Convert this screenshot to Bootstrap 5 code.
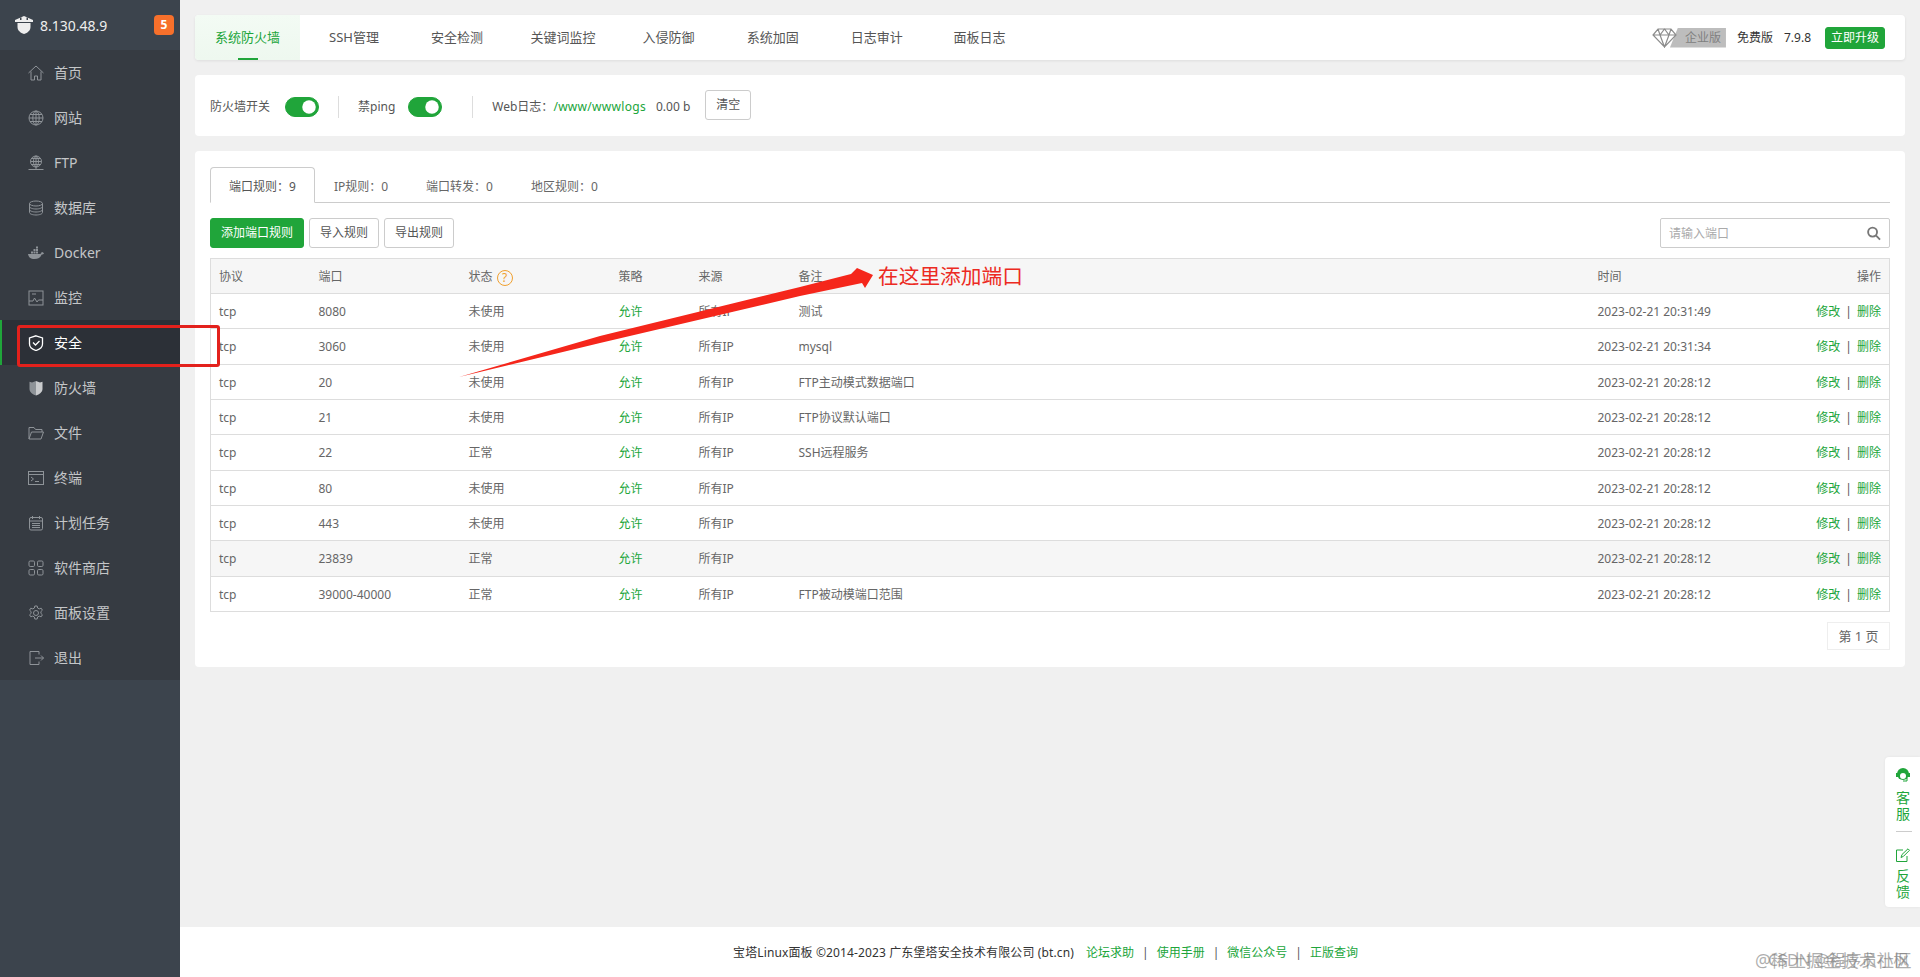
<!DOCTYPE html>
<html lang="zh-CN">
<head>
  <meta charset="utf-8" />
  <meta name="viewport" content="width=device-width, initial-scale=1" />
  <title>宝塔Linux面板</title>
  <link href="https://cdn.jsdelivr.net/npm/bootstrap@5.3.3/dist/css/bootstrap.min.css" rel="stylesheet" />
  <style>
    html, body { height: 977px; overflow: hidden; }
    body {
      font-family: "Noto Sans", "Noto Sans CJK SC", sans-serif;
      font-size: 12px;
      color: #555;
      background-color: #f0f0f0;
      position: relative;
    }
    a { text-decoration: none; }
    .bt-green { color: #20a53a; }

    /* sidebar */
    .side-bar { width: 180px; height: 977px; background-color: #3c444d; flex-shrink: 0; }
    .side-head { height: 50px; padding: 0 6px 0 15px; color: #eee; font-size: 14px; }
    .side-head .ip-text { margin-left: 7px; }
    .side-badge { width: 20px; height: 20px; margin-left: auto; border-radius: 4px; background-color: #f7702b; color: #fff; font-size: 12px; font-weight: 700; }
    .side-menu { background-color: #363b42; }
    .side-menu .nav-link { height: 45px; padding: 0 0 0 28px; gap: 10px; color: #c4c6c8; font-size: 14px; }
    .side-menu .nav-link.active { background-color: #2c3037; color: #fff; box-shadow: inset 2px 0 0 #20a53a; }
    .side-menu svg { width: 16px; height: 16px; flex-shrink: 0; fill: none; stroke: #8e9398; stroke-width: 1; }
    .side-menu .active svg { stroke: #fff; stroke-width: 1.3; }

    /* main */
    .main-area { padding: 15px 15px 0; min-width: 0; }
    .white-panel { background-color: #fff; border-radius: 4px; }
    .top-tabs { height: 45px; box-shadow: 0 1px 3px rgba(0,0,0,.08); padding-right: 20px; }
    .top-tabs .nav-link { height: 45px; line-height: 45px; padding: 0 26px; font-size: 13px; color: #555; border-radius: 0; }
    .top-tabs .nav-link.kw-tab { padding: 0 23px 0 21.5px; }
    .top-tabs .nav-link.inv-tab { padding: 0 26.3px 0 24px; }
    .top-tabs .nav-link.log-tab { padding: 0 24.8px 0 26px; }
    .top-tabs .nav-link.active {
      position: relative;
      margin-right: 3px;
      padding: 0 20px;
      color: #20a53a;
      border-radius: 4px 0 0 4px;
      background: linear-gradient(180deg, #f3fbf4, #eef8ef);
    }
    .top-tabs .nav-link.active::after {
      content: "";
      position: absolute;
      left: 43px;
      bottom: 0;
      width: 20px;
      height: 2px;
      background-color: #20a53a;
    }
    .pro-tag { width: 56px; height: 20px; margin-left: -7px; padding-left: 15px; line-height: 20px; background-color: #bdbdbd; color: #808080; clip-path: polygon(8px 0, 100% 0, 100% 100%, 0 100%); }
    .version-text { color: #333; margin-left: 11px; }
    .up-btn { height: 22px; width: 60px; margin-left: 14px; padding: 0; font-size: 12px; line-height: 20px; border-radius: 3px; }
    .btn-success { --bs-btn-bg: #20a53a; --bs-btn-border-color: #20a53a; --bs-btn-hover-bg: #20a53a; }

    .switch-bar { height: 61px; margin-top: 15px; padding: 0 15px; }
    .switch-bar > span { margin-top: 2px; }
    .switch-bar .form-switch { min-height: 0; margin-top: 3px; margin-bottom: 0; padding: 0; }
    .switch-bar .form-check-input {
      width: 34px;
      height: 20px;
      margin: 0;
      float: none;
      display: block;
      background-color: #20a53a;
      border-color: #20a53a;
    }
    .bar-sep { width: 1px; height: 22px; background-color: #ddd; }
    .gap-a { margin-left: 15px; }
    .gap-b { margin-left: 19px; }
    .gap-c { margin-left: 13px; }
    .gap-d { margin-left: 30px; }
    .log-path { margin-top: 2px; letter-spacing: .3px; }
    .log-size { margin-left: 10px; }
    .clear-btn { height: 29px; margin: 0 0 2px 15px; }
    .small-btn { height: 30px; padding: 0 10px; font-size: 12px; color: #555; background: #fff; border: 1px solid #ccc; border-radius: 3px; }
    .small-btn.btn-success { color: #fff; background-color: #20a53a; border-color: #20a53a; }

    .rule-panel { height: 516px; margin-top: 15px; padding: 16px 15px 0; }
    .rule-panel .nav-tabs { height: 36px; border-bottom-color: #ccc; }
    .rule-panel .nav-link { height: 36px; padding: 1px 18px 0; line-height: 36px; font-size: 12px; color: #666; border-radius: 4px 4px 0 0; }
    .rule-panel .nav-link.active { color: #555; border-color: #ccc #ccc #fff; }
    .rule-tools { column-gap: 5px; margin-top: 15px; }
    .search-box { width: 230px; height: 30px; padding-right: 8px; background: #fff; border: 1px solid #ccc; border-radius: 2px; }
    .search-box .form-control { height: 28px; padding: 0 8px; border: 0; font-size: 12px; box-shadow: none; background: transparent; }
    .search-box .form-control::placeholder { color: #aaa; }

    .rule-table { width: 1680px; margin: 10px 0 0; table-layout: fixed; border: 1px solid #ddd; color: #666; --bs-table-color: #666; }
    .rule-table th, .rule-table td { height: 35.33px; padding: 2px 8px 0; vertical-align: middle; font-size: 12px; font-weight: 400; border-color: #ddd; white-space: nowrap; }
    .rule-table thead th { height: 35px; padding-top: 1px; background-color: #f6f6f6; }
    .rule-table tr.row-hover td { background-color: #f6f6f6; }
    .op-sep { margin: 0 5px; color: #555; }
    .help-dot { display: inline-block; width: 16px; height: 16px; margin-left: 4px; line-height: 14px; text-align: center; border: 1px solid #f0a030; border-radius: 50%; color: #f0a030; vertical-align: -1px; }
    .page-box { width: 63px; height: 28px; margin: 10px 0 0 auto; line-height: 26px; text-align: center; font-size: 13px; color: #666; background: #fff; border: 1px solid #eee; }

    .foot-bar { height: 50px; margin: auto -15px 0; padding: 2px 9px 0 0; background-color: #fff; color: #333; font-size: 12px; }
    .foot-bar a { color: #20a53a; }
    .foot-bar i { font-style: normal; margin: 0 8px; color: #555; }
    .foot-copy { letter-spacing: .12px; }

    /* things that lie over the page */
    .float-help { position: absolute; right: 0; top: 757px; width: 35px; height: 150px; padding-top: 11px; background: #fff; border-radius: 4px 0 0 4px; color: #20a53a; font-size: 14px; line-height: 16px; box-shadow: 0 0 3px rgba(0,0,0,.06); }
    .float-help .help-item { width: 14px; margin-left: 11px; text-align: center; }
    .float-help svg { display: block; }
    .float-help .svc-icon { margin-bottom: 8px; }
    .float-help .fb-icon { margin-bottom: 6px; }
    .float-help hr { width: 16px; margin: 9px 0 16px 11px; border-color: #ccc; opacity: 1; }
    .mark-box { position: absolute; left: 17px; top: 325px; width: 203px; height: 42px; border: 3px solid #e3211c; border-radius: 3px; }
    .mark-arrow { position: absolute; left: 450px; top: 265px; }
    .mark-text { position: absolute; left: 878px; top: 261px; font-size: 20.7px; line-height: 30px; color: #ec2a22; white-space: nowrap; }
    .water-mark { position: absolute; top: 950px; font-size: 17.6px; line-height: 20px; color: rgba(120,120,120,.6); white-space: nowrap; }
    .water-a { left: 1755px; }
    .water-b { left: 1768px; font-size: 16px; }
  </style>
</head>
<body class="d-flex">

  <aside class="side-bar d-flex flex-column">
    <div class="side-head d-flex align-items-center">
      <svg width="18" height="20" viewBox="0 0 18 20"><path d="M0 5 9 1l9 4v2H0z" fill="#eee"/><path d="M5 2.500h1.500V5H5zM11.500 2.500H13V5h-1.500z" fill="#3c444d"/><path d="M2.500 8h13v4c0 3.500-2.800 5.800-6.500 7-3.700-1.200-6.500-3.500-6.500-7z" fill="#eee"/></svg>
      <span class="ip-text">8.130.48.9</span>
      <span class="side-badge d-flex align-items-center justify-content-center">5</span>
    </div>
    <nav class="side-menu nav flex-column">
      <a class="nav-link d-flex align-items-center" href="#"><svg viewBox="0 0 16 16"><path d="M.5 8 8 1l7.500 7M3 6.500V15h3.500v-4h3v4H13V6.500"/></svg>首页</a>
      <a class="nav-link d-flex align-items-center" href="#"><svg viewBox="0 0 16 16"><circle cx="8" cy="8" r="7"/><ellipse cx="8" cy="8" rx="3.200" ry="7"/><path d="M1 8h14M2 4.500h12M2 11.500h12M8 1v14"/></svg>网站</a>
      <a class="nav-link d-flex align-items-center" href="#"><svg viewBox="0 0 16 16"><circle cx="8" cy="6.500" r="5.500"/><ellipse cx="8" cy="6.500" rx="2.500" ry="5.500"/><path d="M2.500 6.500h11M3.500 3.500h9M3.500 9.500h9M8 1v13M.5 14.500h15"/></svg>FTP</a>
      <a class="nav-link d-flex align-items-center" href="#"><svg viewBox="0 0 16 16"><ellipse cx="8" cy="3.500" rx="6.500" ry="2.500"/><path d="M1.500 3.500v9c0 1.400 3 2.500 6.500 2.500s6.500-1.100 6.500-2.500v-9M1.500 6.500c0 1.400 3 2.500 6.500 2.500s6.500-1.100 6.500-2.500M1.500 9.500c0 1.400 3 2.500 6.500 2.500s6.500-1.100 6.500-2.500"/></svg>数据库</a>
      <a class="nav-link d-flex align-items-center" href="#"><svg viewBox="0 0 16 16"><path d="M0 9h12c1 0 1.500-1.200 1.600-2 .8 0 1.600.4 2.400 1.200-.6 1-1.400 1.300-2.300 1.300C12.600 12.600 10 14 6.500 14 2.500 14 .5 12 0 9z" fill="#8e9398" stroke="none"/><path d="M3 6.500h2v2H3zM5.500 6.500h2v2h-2zM8 6.500h2v2H8zM5.500 4h2v2h-2zM8 4h2v2H8zM8 1.500h2v2H8z" fill="#8e9398" stroke="none"/></svg>Docker</a>
      <a class="nav-link d-flex align-items-center" href="#"><svg viewBox="0 0 16 16"><rect x="1" y="1" width="14" height="14"/><path d="M1 11h4l1.500-3L9 12l1.500-2H15M4 4h4"/></svg>监控</a>
      <a class="nav-link active d-flex align-items-center" href="#"><svg viewBox="0 0 16 16"><path d="M8 .8 14.500 3v6c0 3-3 5.500-6.500 6.500C4.500 14.500 1.500 12 1.500 9V3z"/><path d="m5 7.500 2.500 2.500L11.500 6"/></svg>安全</a>
      <a class="nav-link d-flex align-items-center" href="#"><svg viewBox="0 0 16 16"><path d="M8 1 4 2.500 1.500 1.800V9c0 3 3 5.500 6.500 6.500z" fill="#8e9398" stroke="none"/><path d="M8 1l4 1.500 2.500-.7V9c0 3-3 5.500-6.500 6.500z" fill="#c9cbcd" stroke="none"/></svg>防火墙</a>
      <a class="nav-link d-flex align-items-center" href="#"><svg viewBox="0 0 16 16"><path d="M1 14V2.500h5l1.500 2H14V7M1 14l2.500-7H15.500L13 14z"/></svg>文件</a>
      <a class="nav-link d-flex align-items-center" href="#"><svg viewBox="0 0 16 16"><rect x=".5" y="1.500" width="15" height="13"/><path d="M.5 4.500h15M3 7l2.500 2L3 11M7 11.500h4"/></svg>终端</a>
      <a class="nav-link d-flex align-items-center" href="#"><svg viewBox="0 0 16 16"><rect x="1.500" y="2.500" width="13" height="12.500" rx="1.500"/><path d="M1.500 6h13M4.500 1v3M11.500 1v3M4 8.500h8M4 10.500h8M4 12.500h8"/></svg>计划任务</a>
      <a class="nav-link d-flex align-items-center" href="#"><svg viewBox="0 0 16 16"><rect x="1" y="1" width="5.500" height="5.500" rx="1.200"/><rect x="9.500" y="1" width="5.500" height="5.500" rx="1.200"/><rect x="1" y="9.500" width="5.500" height="5.500" rx="1.200"/><rect x="9.500" y="9.500" width="5.500" height="5.500" rx="1.200"/></svg>软件商店</a>
      <a class="nav-link d-flex align-items-center" href="#"><svg viewBox="0 0 16 16"><circle cx="8" cy="8" r="2.500"/><path d="m6.800 1h2.400l.4 2 1.600.9 2-.7 1.200 2-1.500 1.400v1.800l1.500 1.400-1.200 2-2-.7-1.600.9-.4 2H6.800l-.4-2-1.600-.9-2 .7-1.200-2 1.500-1.400V6.600L1.600 5.200l1.200-2 2 .7 1.600-.9z"/></svg>面板设置</a>
      <a class="nav-link d-flex align-items-center" href="#"><svg viewBox="0 0 16 16"><path d="M11 4.500V1.500H2v13h9v-3M7 8h8.500M13 5.500 15.500 8 13 10.500"/></svg>退出</a>
    </nav>
  </aside>

  <main class="main-area flex-grow-1 d-flex flex-column">
    <div class="top-tabs white-panel d-flex align-items-center">
      <ul class="nav flex-nowrap">
        <li class="nav-item"><a class="nav-link active" href="#">系统防火墙</a></li>
        <li class="nav-item"><a class="nav-link" href="#">SSH管理</a></li>
        <li class="nav-item"><a class="nav-link" href="#">安全检测</a></li>
        <li class="nav-item"><a class="nav-link kw-tab" href="#">关键词监控</a></li>
        <li class="nav-item"><a class="nav-link inv-tab" href="#">入侵防御</a></li>
        <li class="nav-item"><a class="nav-link" href="#">系统加固</a></li>
        <li class="nav-item"><a class="nav-link log-tab" href="#">日志审计</a></li>
        <li class="nav-item"><a class="nav-link" href="#">面板日志</a></li>
      </ul>
      <div class="d-flex align-items-center ms-auto">
        <svg class="position-relative z-1" width="25" height="20" viewBox="0 0 25 20" fill="#fff" stroke="#8c8c8c" stroke-width="1.200"><path d="M6 1h13l5 6-11.500 12L1 7zM1 7h23M8 7l4.500 12L17 7M6 1l2 6 4.500-6 4.500 6 2-6"/></svg>
        <span class="pro-tag">企业版</span>
        <span class="version-text">免费版</span>
        <span class="version-text">7.9.8</span>
        <button type="button" class="btn btn-success up-btn">立即升级</button>
      </div>
    </div>

    <div class="switch-bar white-panel d-flex align-items-center">
      <span>防火墙开关</span>
      <div class="form-check form-switch gap-a"><input class="form-check-input" type="checkbox" role="switch" checked /></div>
      <span class="bar-sep gap-b"></span>
      <span class="gap-b">禁ping</span>
      <div class="form-check form-switch gap-c"><input class="form-check-input" type="checkbox" role="switch" checked /></div>
      <span class="bar-sep gap-d"></span>
      <span class="gap-b">Web日志：</span>
      <a class="bt-green log-path" href="#">/www/wwwlogs</a>
      <span class="log-size">0.00 b</span>
      <button type="button" class="small-btn clear-btn">清空</button>
    </div>

    <div class="rule-panel white-panel">
      <ul class="nav nav-tabs">
        <li class="nav-item"><a class="nav-link active" href="#">端口规则：9</a></li>
        <li class="nav-item"><a class="nav-link" href="#">IP规则：0</a></li>
        <li class="nav-item"><a class="nav-link" href="#">端口转发：0</a></li>
        <li class="nav-item"><a class="nav-link" href="#">地区规则：0</a></li>
      </ul>
      <div class="rule-tools d-flex align-items-center">
        <button type="button" class="small-btn btn btn-success">添加端口规则</button>
        <button type="button" class="small-btn">导入规则</button>
        <button type="button" class="small-btn">导出规则</button>
        <div class="search-box d-flex align-items-center ms-auto">
          <input class="form-control" type="text" placeholder="请输入端口" />
          <svg width="15" height="15" viewBox="0 0 15 15" fill="none" stroke="#777" stroke-width="2"><circle cx="6" cy="6" r="4.800"/><path d="m9.500 9.500 4.500 4.500"/></svg>
        </div>
      </div>
      <table class="table rule-table">
        <colgroup>
          <col style="width:100px" /><col style="width:150px" /><col style="width:150px" /><col style="width:80px" /><col style="width:100px" /><col style="width:799px" /><col style="width:180px" /><col />
        </colgroup>
        <thead>
          <tr><th>协议</th><th>端口</th><th>状态<span class="help-dot">?</span></th><th>策略</th><th>来源</th><th>备注</th><th>时间</th><th class="text-end">操作</th></tr>
        </thead>
        <tbody>
          <tr><td>tcp</td><td>8080</td><td>未使用</td><td class="bt-green">允许</td><td>所有IP</td><td>测试</td><td>2023-02-21 20:31:49</td><td class="text-end"><a class="bt-green" href="#">修改</a><span class="op-sep">|</span><a class="bt-green" href="#">删除</a></td></tr>
          <tr><td>tcp</td><td>3060</td><td>未使用</td><td class="bt-green">允许</td><td>所有IP</td><td>mysql</td><td>2023-02-21 20:31:34</td><td class="text-end"><a class="bt-green" href="#">修改</a><span class="op-sep">|</span><a class="bt-green" href="#">删除</a></td></tr>
          <tr><td>tcp</td><td>20</td><td>未使用</td><td class="bt-green">允许</td><td>所有IP</td><td>FTP主动模式数据端口</td><td>2023-02-21 20:28:12</td><td class="text-end"><a class="bt-green" href="#">修改</a><span class="op-sep">|</span><a class="bt-green" href="#">删除</a></td></tr>
          <tr><td>tcp</td><td>21</td><td>未使用</td><td class="bt-green">允许</td><td>所有IP</td><td>FTP协议默认端口</td><td>2023-02-21 20:28:12</td><td class="text-end"><a class="bt-green" href="#">修改</a><span class="op-sep">|</span><a class="bt-green" href="#">删除</a></td></tr>
          <tr><td>tcp</td><td>22</td><td>正常</td><td class="bt-green">允许</td><td>所有IP</td><td>SSH远程服务</td><td>2023-02-21 20:28:12</td><td class="text-end"><a class="bt-green" href="#">修改</a><span class="op-sep">|</span><a class="bt-green" href="#">删除</a></td></tr>
          <tr><td>tcp</td><td>80</td><td>未使用</td><td class="bt-green">允许</td><td>所有IP</td><td></td><td>2023-02-21 20:28:12</td><td class="text-end"><a class="bt-green" href="#">修改</a><span class="op-sep">|</span><a class="bt-green" href="#">删除</a></td></tr>
          <tr><td>tcp</td><td>443</td><td>未使用</td><td class="bt-green">允许</td><td>所有IP</td><td></td><td>2023-02-21 20:28:12</td><td class="text-end"><a class="bt-green" href="#">修改</a><span class="op-sep">|</span><a class="bt-green" href="#">删除</a></td></tr>
          <tr class="row-hover"><td>tcp</td><td>23839</td><td>正常</td><td class="bt-green">允许</td><td>所有IP</td><td></td><td>2023-02-21 20:28:12</td><td class="text-end"><a class="bt-green" href="#">修改</a><span class="op-sep">|</span><a class="bt-green" href="#">删除</a></td></tr>
          <tr><td>tcp</td><td>39000-40000</td><td>正常</td><td class="bt-green">允许</td><td>所有IP</td><td>FTP被动模端口范围</td><td>2023-02-21 20:28:12</td><td class="text-end"><a class="bt-green" href="#">修改</a><span class="op-sep">|</span><a class="bt-green" href="#">删除</a></td></tr>
        </tbody>
      </table>
      <div class="page-box">第 1 页</div>
    </div>

    <footer class="foot-bar d-flex align-items-center justify-content-center">
      <span class="foot-copy me-2">宝塔Linux面板 ©2014-2023 广东堡塔安全技术有限公司 (bt.cn)</span>
      <a class="ms-1" href="#">论坛求助</a><i>|</i>
      <a href="#">使用手册</a><i>|</i>
      <a href="#">微信公众号</a><i>|</i>
      <a href="#">正版查询</a>
    </footer>
  </main>

  <div class="float-help">
    <div class="help-item">
      <svg class="svc-icon" width="14" height="14" viewBox="0 0 14 14"><circle cx="7" cy="6" r="6" fill="#20a53a"/><circle cx="7" cy="8" r="3" fill="#fff"/><rect x="0" y="5" width="2" height="4" fill="#20a53a"/><rect x="12" y="5" width="2" height="4" fill="#20a53a"/><path d="M7 13h4v-3" fill="none" stroke="#20a53a"/></svg>
      客服
    </div>
    <hr />
    <div class="help-item">
      <svg class="fb-icon" width="14" height="14" viewBox="0 0 14 14" fill="none" stroke="#20a53a"><path d="M11 8v5.500H.5V2H7M5 9.500l1-3L12 .8l1.500 1.500-6 6z"/></svg>
      反馈
    </div>
  </div>

  <div class="mark-box"></div>
  <svg class="mark-arrow" width="430" height="120" viewBox="450 265 430 120"><polygon points="459,377 600,336 800,287 851,274 857,268 873,275 865,288 862,283 800,296 600,343" fill="#f5261b"/></svg>
  <div class="mark-text">在这里添加端口</div>

  <div class="water-mark water-a">@稀土掘金技术社区</div>
  <div class="water-mark water-b">CSDN @程序员小枫</div>

  <script src="https://cdn.jsdelivr.net/npm/bootstrap@5.3.3/dist/js/bootstrap.bundle.min.js"></script>
</body>
</html>
